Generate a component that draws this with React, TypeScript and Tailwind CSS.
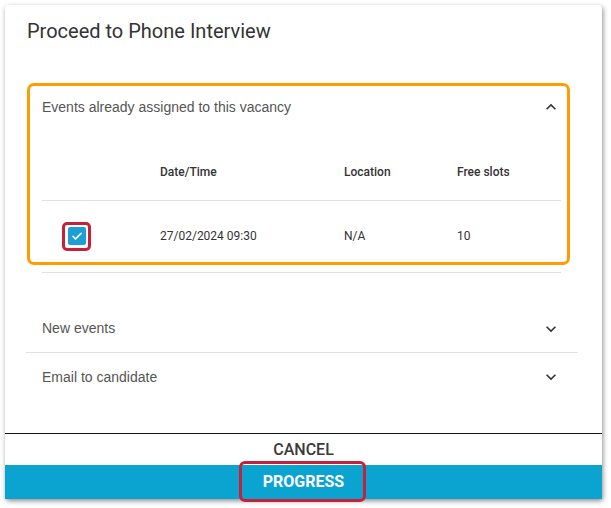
import React from "react";

const Chevron = ({ up = false }: { up?: boolean }) => (
  <svg
    width="20"
    height="20"
    viewBox="0 0 24 24"
    className={up ? "rotate-180" : ""}
    fill="#333"
  >
    <path d="M16.59 8.59 12 13.17 7.41 8.59 6 10l6 6 6-6z" />
  </svg>
);

export default function App() {
  return (
    <div className="w-[611px] h-[508px] bg-white pt-[5px] pl-[5px] overflow-hidden">
      <div className="relative w-[597px] h-[494px] bg-white rounded-[3px] shadow-[1px_2px_5px_rgba(0,0,0,0.45)] flex flex-col">
        {/* Title */}
        <div className="pt-[12px] pl-[22px] h-[45px]">
          <h1 className="text-[20px] leading-[28px] text-[#333] font-['Roboto',sans-serif] font-normal">
            Proceed to Phone Interview
          </h1>
        </div>

        {/* Orange highlighted accordion */}
        <div className="mt-[33px] ml-[22px] w-[543px] h-[182px] border-[3px] border-[#ff9c00] rounded-[7px] flex flex-col">
          <div className="h-[42px] flex items-center justify-between pl-[12px] pr-[6px]">
            <span className="text-[14px] text-[#555] font-['Liberation_Sans',Arial,sans-serif]">
              Events already assigned to this vacancy
            </span>
            <Chevron up />
          </div>
          <div className="ml-[12px] mr-[6px] flex flex-col font-['Roboto',sans-serif] text-[12px] text-[#333]">
            <div className="mt-[16px] h-[56px] flex items-center font-medium">
              <div className="w-[118px]" />
              <div className="w-[184px]">Date/Time</div>
              <div className="w-[113px]">Location</div>
              <div>Free slots</div>
            </div>
            <div className="h-px bg-[#e0e0e0]" />
            <div className="h-[61px] pt-[9px] flex items-center">
              <div className="w-[118px] pl-[20px]">
                <div className="w-[29px] h-[29px] border-[3px] border-[#c8203a] rounded-[5px] flex items-center justify-center">
                  <div className="w-[18px] h-[18px] bg-[#1b9fd6] rounded-[2px] flex items-center justify-center">
                    <svg width="14" height="14" viewBox="0 0 24 24" fill="none" stroke="white" strokeWidth="2.8" strokeLinecap="round" strokeLinejoin="round">
                      <path d="M5 12.5l4.5 4.5L19 7.5" />
                    </svg>
                  </div>
                </div>
              </div>
              <div className="w-[184px]">27/02/2024 09:30</div>
              <div className="w-[113px]">N/A</div>
              <div>10</div>
            </div>
          </div>
        </div>

        <div className="mt-[7px] ml-[37px] mr-[41px] h-px bg-[#e0e0e0]" />

        {/* Collapsed accordions */}
        <div className="mt-[32px] ml-[21px] mr-[24px] flex flex-col font-['Liberation_Sans',Arial,sans-serif] text-[14px] text-[#555]">
          <div className="h-[47px] flex items-center justify-between pl-[16px] pr-[17px]">
            <span>New events</span>
            <Chevron />
          </div>
          <div className="h-px bg-[#e0e0e0]" />
          <div className="h-[48px] flex items-center justify-between pl-[16px] pr-[17px]">
            <span>Email to candidate</span>
            <Chevron />
          </div>
        </div>

        <div className="flex-1" />

        {/* Footer */}
        <div className="h-px bg-[#111]" />
        <div className="h-[31px] flex items-center justify-center font-['Roboto',sans-serif] font-medium text-[16px] text-[#3a3a3a]">
          CANCEL
        </div>
        <div className="h-[34px] bg-[#0ba3d0] flex items-center justify-center font-['Roboto',sans-serif] font-bold text-[16px] text-white">
          PROGRESS
        </div>

        {/* Annotation around PROGRESS */}
        <div className="absolute left-[234px] top-[456px] w-[127px] h-[41px] border-[3px] border-[#c8203a] rounded-[6px] pointer-events-none" />
      </div>
    </div>
  );
}
